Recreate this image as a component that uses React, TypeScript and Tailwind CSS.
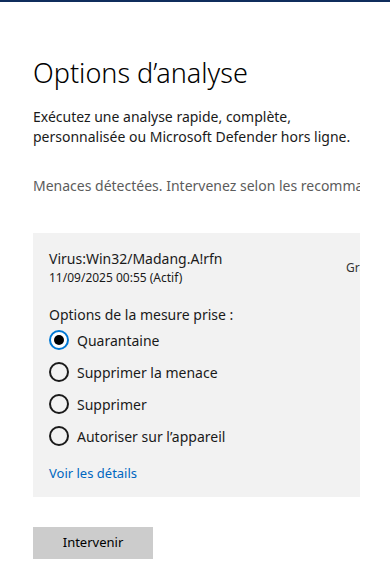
import React from 'react';

const options = [
  { label: 'Quarantaine', checked: true },
  { label: 'Supprimer la menace', checked: false },
  { label: 'Supprimer', checked: false },
  { label: 'Autoriser sur l’appareil', checked: false },
];

function Radio({ checked }: { checked: boolean }) {
  if (checked) {
    return (
      <span className="flex h-[20px] w-[20px] shrink-0 items-center justify-center rounded-full border-2 border-[#0078d4] bg-white">
        <span className="h-[10px] w-[10px] rounded-full bg-black" />
      </span>
    );
  }
  return <span className="h-[20px] w-[20px] shrink-0 rounded-full border-2 border-[#1a1a1a]" />;
}

export default function App() {
  return (
    <main
      className="min-h-[585px] w-[390px] border-t-2 border-[#0f2d5c] bg-white text-[#1a1a1a]"
      style={{ fontFamily: '"Noto Sans", "Open Sans", sans-serif' }}
    >
      <div className="ml-[33px] w-[327px] overflow-hidden pt-[53px]">
        {/* Header */}
        <h1 className="text-[27px] font-light leading-[36px] text-black">Options d’analyse</h1>
        <p className="mt-[16px] text-[14px] leading-[20px] text-[#1a1a1a]">
          Exécutez une analyse rapide, complète,
          <br />
          personnalisée ou Microsoft Defender hors ligne.
        </p>

        <p className="mt-[29px] whitespace-nowrap text-[14px] leading-[20px] text-[#5c5c5c]">
          Menaces détectées. Intervenez selon les recommandations.
        </p>

        {/* Threat card */}
        <section className="mt-[37px] w-[360px] bg-[#f2f2f2] pb-[15px] pl-[16px] pt-[16px]">
          <div className="flex items-start">
            <div className="w-[297px]">
              <div className="text-[14px] leading-[20px]">Virus:Win32/Madang.A!rfn</div>
              <div className="text-[12px] leading-[17px]">11/09/2025 00:55 (Actif)</div>
            </div>
            <div className="mt-[10px] text-[12px] text-[#333]">Grave</div>
          </div>

          <div className="mt-[20px] text-[14px] leading-[18px]">Options de la mesure prise :</div>
          <div className="flex flex-col">
            {options.map((o) => (
              <label key={o.label} className="flex h-[32px] items-center gap-[8px]">
                <Radio checked={o.checked} />
                <span className="text-[14px]">{o.label}</span>
              </label>
            ))}
          </div>

          <a className="mt-[12px] block text-[13px] leading-[18px] text-[#0067c0]">Voir les détails</a>
        </section>

        <button className="mt-[30px] h-[32px] w-[120px] bg-[#cccccc] text-[13px] text-black">
          Intervenir
        </button>
      </div>
    </main>
  );
}
